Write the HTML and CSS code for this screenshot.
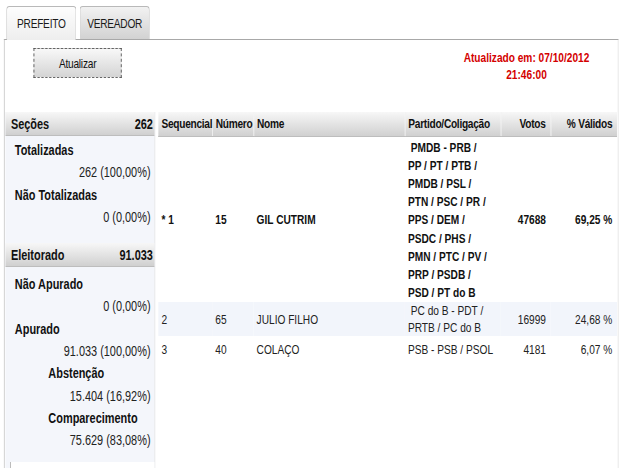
FILE: index.html
```html
<!DOCTYPE html>
<html lang="pt">
<head>
<meta charset="utf-8">
<link rel="stylesheet" href="styles.css">
</head>
<body>
<div class="frame">
<div class="page">
<div class="tabs">
  <div class="tab active">PREFEITO</div>
  <div class="tab">VEREADOR</div>
</div>
<div class="panel">
  <div class="top">
    <button class="btn">Atualizar</button>
    <div class="stamp">Atualizado em: 07/10/2012<br>21:46:00</div>
  </div>
  <div class="body">
    <div class="side">
      <div class="shead"><span>Seções</span><span>262</span></div>
      <div class="grp">
        <div class="lbl">Totalizadas</div>
        <div class="val">262 (100,00%)</div>
        <div class="lbl">Não Totalizadas</div>
        <div class="val">0 (0,00%)</div>
      </div>
      <div class="shead gap"><span>Eleitorado</span><span>91.033</span></div>
      <div class="grp g2">
        <div class="lbl">Não Apurado</div>
        <div class="val">0 (0,00%)</div>
        <div class="lbl">Apurado</div>
        <div class="val">91.033 (100,00%)</div>
        <div class="lbl ind">Abstenção</div>
        <div class="val">15.404 (16,92%)</div>
        <div class="lbl ind">Comparecimento</div>
        <div class="val">75.629 (83,08%)</div>
      </div>
      <div class="sbox"></div>
    </div>
    <table class="res">
      <colgroup>
        <col class="c1"><col class="c2"><col class="c3"><col class="c4"><col class="c5"><col class="c6">
      </colgroup>
      <thead>
        <tr><th>Sequencial</th><th>Número</th><th>Nome</th><th>Partido/Coligação</th><th class="r">Votos</th><th class="r">% Válidos</th></tr>
      </thead>
      <tbody>
        <tr class="win">
          <td>* 1</td><td>15</td><td>GIL CUTRIM</td>
          <td class="party">&nbsp;PMDB - PRB /<br>PP / PT / PTB /<br>PMDB / PSL /<br>PTN / PSC / PR /<br>PPS / DEM /<br>PSDC / PHS /<br>PMN / PTC / PV /<br>PRP / PSDB /<br>PSD / PT do B</td>
          <td class="r">47688</td><td class="r">69,25 %</td>
        </tr>
        <tr class="alt">
          <td>2</td><td>65</td><td>JULIO FILHO</td>
          <td class="party">&nbsp;PC do B - PDT /<br>PRTB / PC do B</td>
          <td class="r">16999</td><td class="r">24,68 %</td>
        </tr>
        <tr class="last">
          <td>3</td><td>40</td><td>COLAÇO</td>
          <td class="party">PSB - PSB / PSOL</td>
          <td class="r">4181</td><td class="r">6,07 %</td>
        </tr>
      </tbody>
    </table>
  </div>
</div>
</div>
</div>
</body>
</html>
```
FILE: styles.css
```css
* { box-sizing: border-box; }
html, body { margin: 0; padding: 0; background: #fff; overflow: hidden; }
body {
  width: 624px;
  height: 468px;
}
.frame {
  width: 624px;
  height: 468px;
  overflow: hidden;
}
/* the reference is a horizontally condensed capture */
.page {
  width: 800px;
  transform: scaleX(0.78);
  transform-origin: 0 0;
  font-family: "Liberation Sans", Arial, sans-serif;
  color: #111;
}
.tabs {
  display: flex;
  gap: 4px;
  padding: 6px 0 0 8px;
  height: 39px;
}
.tab {
  width: 90px;
  height: 33px;
  border: 1px solid #b9b9b9;
  border-bottom: none;
  border-radius: 4px 4px 0 0;
  background: linear-gradient(#f2f2f2, #d2d2d2);
  font-size: 13px;
  letter-spacing: -0.3px;
  line-height: 34px;
  text-align: center;
  color: #1a1a1a;
}
.tab.active {
  background: linear-gradient(#fdfdfd, #eeeeee);
  height: 34px;
  margin-bottom: -1px;
  position: relative;
  z-index: 1;
}
.panel {
  margin-left: 5px;
  width: 788px;
  height: 429px;
  border-top: 1px solid #a8a8a8;
  border-left: 1px solid #c4c4c4;
  border-right: 1px solid #e2e2e2;
}
.top {
  display: flex;
  justify-content: space-between;
  height: 72px;
  padding: 8px 0 0 37px;
}
.btn {
  width: 113px;
  height: 30px;
  border: 1px dashed #555;
  background: linear-gradient(#f8f8f8, #d4d4d4);
  font-family: inherit;
  font-size: 13px;
  letter-spacing: -0.3px;
  color: #111;
  padding: 0;
}
.stamp {
  color: #d40000;
  font-weight: bold;
  font-size: 13px;
  line-height: 17px;
  text-align: center;
  width: 190px;
  margin-right: 22px;
  padding-top: 1px;
}
.body {
  display: flex;
  align-items: flex-start;
  gap: 4px;
  padding-left: 1px;
}
.side {
  width: 192px;
  background: #f4f6fb;
  border-right: 1px solid #e6e6e6;
  height: 356px;
  display: flex;
  flex-direction: column;
}
.shead {
  display: flex;
  justify-content: space-between;
  height: 24px;
  line-height: 24px;
  padding: 0 2px 0 7px;
  font-weight: bold;
  font-size: 14px;
  background: linear-gradient(#f7f7f7, #d0d0d0);
  border-bottom: 1px solid #bdbdbd;
}
.shead.gap { margin-top: 15px; }
.grp { padding-top: 3px; }
.grp.g2 { padding-top: 6px; }
.lbl {
  font-weight: bold;
  font-size: 14px;
  line-height: 22.3px;
  padding-left: 12px;
}
.lbl.ind { padding-left: 55px; }
.val {
  font-size: 14px;
  line-height: 22.3px;
  text-align: right;
  padding-right: 5px;
  color: #222;
}
.sbox {
  margin: 10px 0 0 6px;
  border-left: 1px solid #aaa;
  flex: 1;
  background: #fff;
}
.res {
  border-collapse: collapse;
  table-layout: fixed;
  width: 588px;
  font-size: 13px;
}
.c1 { width: 69px; }
.c2 { width: 53px; }
.c3 { width: 194px; }
.c4 { width: 123px; }
.c5 { width: 64px; }
.c6 { width: 85px; }
.res th {
  height: 24px;
  text-align: left;
  font-weight: bold;
  letter-spacing: -0.35px;
  padding: 0 3px 0 4px;
  background: linear-gradient(#f7f7f7, #d0d0d0);
  border-bottom: 1px solid #bdbdbd;
  border-right: 1px solid #f2f2f2;
  white-space: nowrap;
}
.res th:last-child { border-right: none; }
.res td {
  padding: 0 3px 0 4px;
  vertical-align: middle;
  line-height: 17px;
  color: #222;
  white-space: nowrap;
}
.res .r { text-align: right; padding-right: 6px; }
.win td { font-weight: bold; line-height: 18.2px; color: #111; padding-top: 2px; }
.alt td { background: #f2f5fb; }
.last td { height: 27px; }
```
